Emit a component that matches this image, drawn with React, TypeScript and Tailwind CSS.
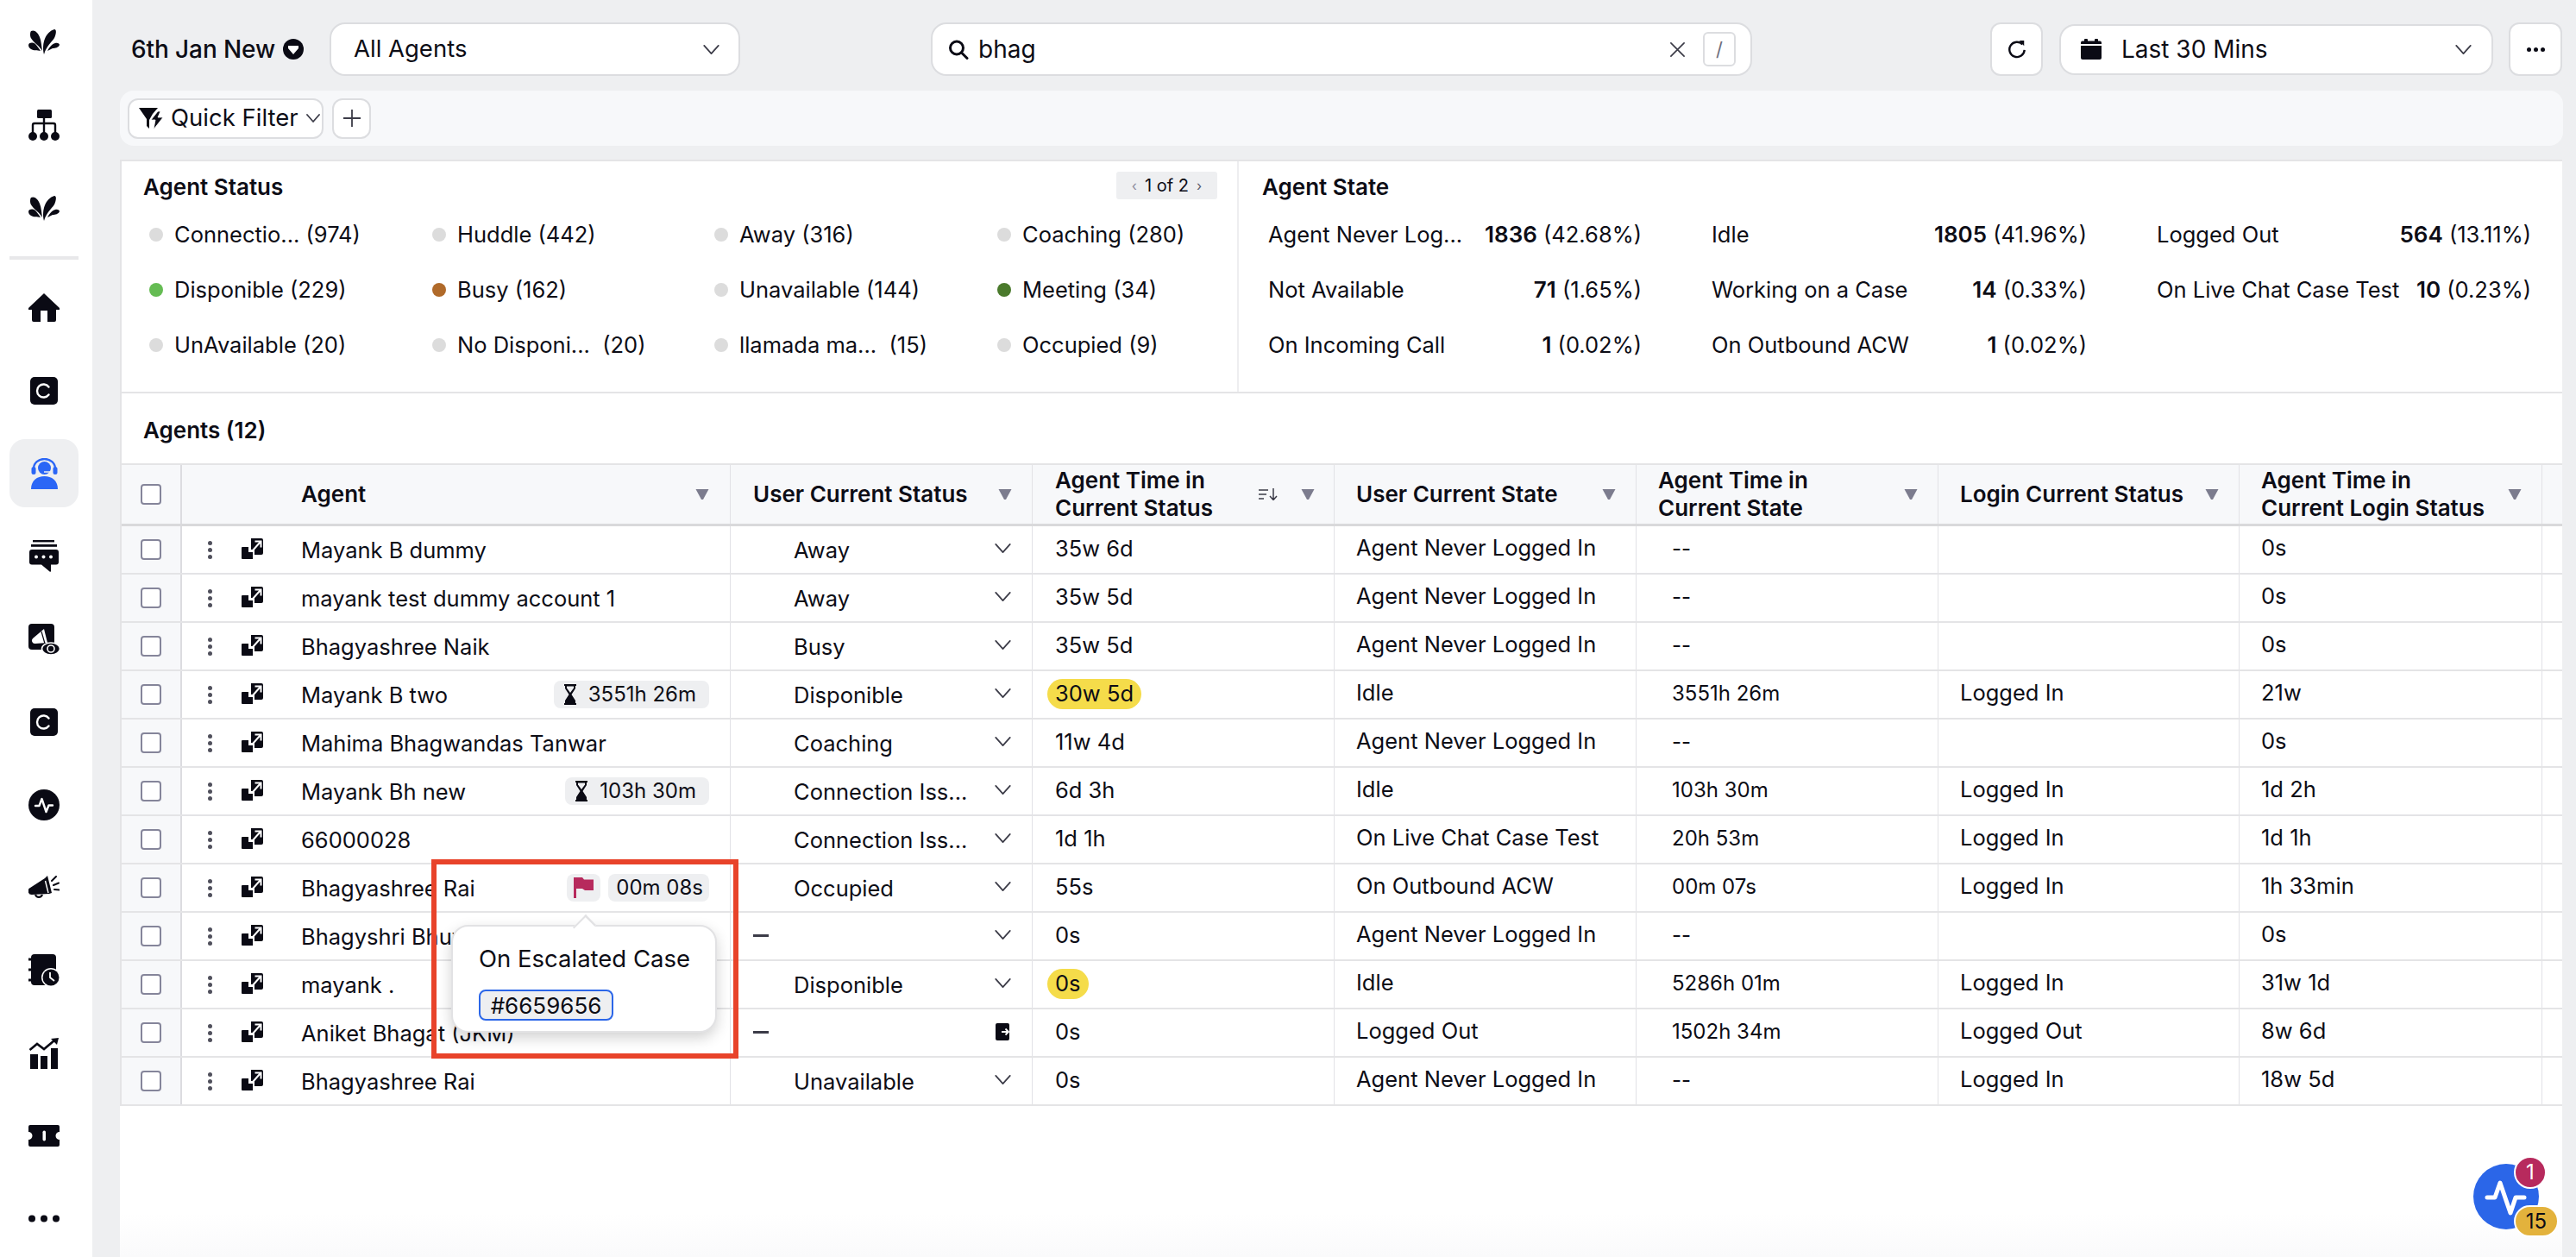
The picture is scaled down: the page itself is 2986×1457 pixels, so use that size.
import React from "react";

const Chevron = ({ className = "" }: { className?: string }) => (
  <svg viewBox="0 0 20 12" className={`w-[19px] h-[11px] ${className}`} fill="none" stroke="#3c3c48" strokeWidth="1.9" strokeLinecap="round" strokeLinejoin="round">
    <path d="M1 1 L10 11 L19 1" />
  </svg>
);

const Tri = ({ className = "" }: { className?: string }) => (
  <svg viewBox="0 0 16 12" className={`w-[16px] h-[12px] ${className}`} fill="#7c7c8e">
    <path d="M0.5 0 H15.5 L9 12 H7 Z" />
  </svg>
);

const Logo = ({ className = "" }: { className?: string }) => (
  <svg viewBox="0 0 36 29" className={className} fill="#0a0a14">
    <path d="M18 29 C15 16 20 3 30 0 C33 0 32 6 30 10 C26 16 21 19 18 29Z" />
    <path d="M3 2 C7 0 11 4 13 9 C15 14 15 19 16 25 C12 18 2 13 2 7 C2 5 2 3 3 2Z" />
    <path d="M0 18 C1 15 5 15 8 17 C10 19 12 22 14 25 C10 24 6 25 3 23 C1 22 0 20 0 18Z" />
    <path d="M22 25 C24 21 27 17 31 16 C34 15 36 17 36 18 C35 21 31 22 28 22 C26 23 24 24 22 25Z" />
  </svg>
);

const CBox = ({ className = "" }: { className?: string }) => (
  <svg viewBox="0 0 32 32" className={className}>
    <rect width="32" height="32" rx="5" fill="#0a0a14" />
    <path d="M21.5 11.5 A7.5 7.5 0 1 0 21.5 20.5" fill="none" stroke="#fff" strokeWidth="2.4" strokeLinecap="round" />
  </svg>
);

const OpenIcon = () => (
  <svg viewBox="0 0 25 24" className="w-[25px] h-[24px]">
    <path d="M1 10 H8 V16 H13 V24 H1 a1 1 0 0 1 -1 -1 V11 a1 1 0 0 1 1 -1Z" fill="#0a0a14" />
    <path d="M11 0 H23 a2 2 0 0 1 2 2 V17 a2 2 0 0 1 -2 2 H15 V13 H11 Z" fill="#0a0a14" />
    <path d="M13 14 L21.5 4.5 M15.5 3.5 H22.5 V10.5" fill="none" stroke="#fff" strokeWidth="2" />
  </svg>
);

const Hourglass = () => (
  <svg viewBox="0 0 16 24" className="w-[16px] h-[24px] shrink-0">
    <path d="M1 0 H15 V2 H14 V5 L9.5 12 L14 19 V22 H15 V24 H1 V22 H2 V19 L6.5 12 L2 5 V2 H1Z" fill="#0a0a14" />
    <path d="M4 2.5 H12 V4.5 L8 10 L4 4.5Z" fill="#eeeff1" />
  </svg>
);

const Flag = () => (
  <svg viewBox="0 0 23 24" className="w-[23px] h-[24px]" fill="#b72a5d">
    <path d="M0 0 H10 L12 2.5 H23 V15 H13 L10 13 H3 V24 H0Z" />
  </svg>
);

const LogoutBox = () => (
  <svg viewBox="0 0 18 20" className="w-[18px] h-[20px]">
    <path d="M2 0 H14 a2 2 0 0 1 2 2 V18 a2 2 0 0 1 -2 2 H2 a2 2 0 0 1 -2 -2 V2 a2 2 0 0 1 2 -2Z" fill="#0a0a14" />
    <path d="M7 10 H15 M11.5 6.5 L15 10 L11.5 13.5" fill="none" stroke="#fff" strokeWidth="1.8" />
  </svg>
);

type Row = {
  name: string;
  status: string;
  dash?: boolean;
  logout?: boolean;
  t1: string;
  pill?: boolean;
  state: string;
  t2: string;
  login: string;
  t3: string;
  badge?: string;
  flag?: boolean;
};

const rows: Row[] = [
  { name: "Mayank B dummy", status: "Away", t1: "35w 6d", state: "Agent Never Logged In", t2: "--", login: "", t3: "0s" },
  { name: "mayank test dummy account 1", status: "Away", t1: "35w 5d", state: "Agent Never Logged In", t2: "--", login: "", t3: "0s" },
  { name: "Bhagyashree Naik", status: "Busy", t1: "35w 5d", state: "Agent Never Logged In", t2: "--", login: "", t3: "0s" },
  { name: "Mayank B two", status: "Disponible", t1: "30w 5d", pill: true, state: "Idle", t2: "3551h 26m", login: "Logged In", t3: "21w", badge: "3551h 26m" },
  { name: "Mahima Bhagwandas Tanwar", status: "Coaching", t1: "11w 4d", state: "Agent Never Logged In", t2: "--", login: "", t3: "0s" },
  { name: "Mayank Bh new", status: "Connection Iss...", t1: "6d 3h", state: "Idle", t2: "103h 30m", login: "Logged In", t3: "1d 2h", badge: "103h 30m" },
  { name: "66000028", status: "Connection Iss...", t1: "1d 1h", state: "On Live Chat Case Test", t2: "20h 53m", login: "Logged In", t3: "1d 1h" },
  { name: "Bhagyashree Rai", status: "Occupied", t1: "55s", state: "On Outbound ACW", t2: "00m 07s", login: "Logged In", t3: "1h 33min", flag: true },
  { name: "Bhagyshri Bhuyan", status: "", dash: true, t1: "0s", state: "Agent Never Logged In", t2: "--", login: "", t3: "0s" },
  { name: "mayank .", status: "Disponible", t1: "0s", pill: true, state: "Idle", t2: "5286h 01m", login: "Logged In", t3: "31w 1d" },
  { name: "Aniket Bhagat (JKM)", status: "", dash: true, logout: true, t1: "0s", state: "Logged Out", t2: "1502h 34m", login: "Logged Out", t3: "8w 6d" },
  { name: "Bhagyashree Rai", status: "Unavailable", t1: "0s", state: "Agent Never Logged In", t2: "--", login: "Logged In", t3: "18w 5d" },
];

const statuses: [string, string, string][] = [
  ["bg-[#dcdcdc]", "Connectio...", "(974)"],
  ["bg-[#dcdcdc]", "Huddle", "(442)"],
  ["bg-[#dcdcdc]", "Away", "(316)"],
  ["bg-[#dcdcdc]", "Coaching", "(280)"],
  ["bg-[#65bc53]", "Disponible", "(229)"],
  ["bg-[#b06a2a]", "Busy", "(162)"],
  ["bg-[#dcdcdc]", "Unavailable", "(144)"],
  ["bg-[#4a7a2c]", "Meeting", "(34)"],
  ["bg-[#dcdcdc]", "UnAvailable", "(20)"],
  ["bg-[#dcdcdc]", "No Disponi...", " (20)"],
  ["bg-[#dcdcdc]", "llamada ma...", " (15)"],
  ["bg-[#dcdcdc]", "Occupied", "(9)"],
];

const states: [string, string, string][] = [
  ["Agent Never Log...", "1836", "(42.68%)"],
  ["Idle", "1805", "(41.96%)"],
  ["Logged Out", "564", "(13.11%)"],
  ["Not Available", "71", "(1.65%)"],
  ["Working on a Case", "14", "(0.33%)"],
  ["On Live Chat Case Test", "10", "(0.23%)"],
  ["On Incoming Call", "1", "(0.02%)"],
  ["On Outbound ACW", "1", "(0.02%)"],
];

const Check = () => <div className="w-[24px] h-[24px] rounded-[4px] border-2 border-[#85859a] bg-white" />;

export default function App() {
  return (
    <div className="relative flex w-[2986px] h-[1457px] overflow-hidden bg-[#eeeff1] font-[Inter,sans-serif] text-[25.5px] text-[#0d0d16]">
      {/* Sidebar */}
      <aside className="relative w-[107px] h-full shrink-0 bg-white">
        <Logo className="absolute left-[33px] top-[34px] w-[36px] h-[29px]" />
        <svg viewBox="0 0 36 36" className="absolute left-[33px] top-[127px] w-[36px] h-[36px]" fill="#0a0a14">
          <rect x="10" y="0" width="17" height="10" rx="1.5" />
          <path d="M18 10 V28 M5 28 V18 a2 2 0 0 1 2 -2 H29 a2 2 0 0 1 2 2 V28" fill="none" stroke="#0a0a14" strokeWidth="2.4" />
          <circle cx="5" cy="31" r="5" />
          <circle cx="18" cy="31" r="5" />
          <circle cx="31" cy="31" r="5" />
        </svg>
        <Logo className="absolute left-[33px] top-[227px] w-[36px] h-[29px]" />
        <div className="absolute left-[11px] top-[297px] w-[80px] h-[4px] bg-[#e8e8ea]" />
        <svg viewBox="0 0 36 33" className="absolute left-[33px] top-[340px] w-[36px] h-[33px]" fill="#0a0a14">
          <path d="M18 0 L36 17 V19 H32 V31 a2 2 0 0 1 -2 2 H22 V20 H14 V33 H6 a2 2 0 0 1 -2 -2 V19 H0 V17Z" />
        </svg>
        <CBox className="absolute left-[35px] top-[437px] w-[32px] h-[32px]" />
        <div className="absolute left-[11px] top-[509px] w-[80px] h-[79px] rounded-[18px] bg-[#eeeff1]" />
        <svg viewBox="0 0 31 36" className="absolute left-[36px] top-[531px] w-[31px] h-[36px]">
          <path d="M0 36 C0 26 7 21 15.5 21 C24 21 31 26 31 36Z" fill="#2b66f6" />
          <circle cx="15.5" cy="11.5" r="7.5" fill="#2b66f6" />
          <path d="M3 12 A12.5 11 0 0 1 28 12" fill="none" stroke="#2b66f6" strokeWidth="2.4" />
          <rect x="0.5" y="10" width="5" height="9" rx="2.5" fill="#2b66f6" />
          <rect x="25.5" y="10" width="5" height="9" rx="2.5" fill="#2b66f6" />
          <path d="M15 16 H25" stroke="#eeeff1" strokeWidth="1.5" />
        </svg>
        <svg viewBox="0 0 34 37" className="absolute left-[34px] top-[626px] w-[34px] h-[37px]" fill="#0a0a14">
          <rect x="4" y="0" width="25" height="2.4" />
          <rect x="2" y="5" width="30" height="2.8" />
          <path d="M3 11 H31 a3 3 0 0 1 3 3 V25.5 a3 3 0 0 1 -3 3 H25 V36 a0.8 0.8 0 0 1 -1.4 0.5 L14 28.5 H3 a3 3 0 0 1 -3 -3 V14 a3 3 0 0 1 3 -3Z" />
          <circle cx="8" cy="19.5" r="2" fill="#fff" />
          <circle cx="16.5" cy="19.5" r="2" fill="#fff" />
          <circle cx="25" cy="19.5" r="2" fill="#fff" />
        </svg>
        <svg viewBox="0 0 36 36" className="absolute left-[33px] top-[723px] w-[36px] h-[36px]">
          <rect width="30" height="30" rx="4" fill="#0a0a14" />
          <path d="M5 17 L18 6 L22 22 L8 23 A3.5 3.5 0 0 1 5 17Z" fill="#fff" />
          <path d="M15 9 L19 23" stroke="#0a0a14" strokeWidth="1.2" />
          <ellipse cx="26" cy="29" rx="10.5" ry="7" fill="#0a0a14" stroke="#fff" strokeWidth="1.6" />
          <circle cx="26" cy="29" r="4" fill="none" stroke="#fff" strokeWidth="1.6" />
        </svg>
        <CBox className="absolute left-[35px] top-[821px] w-[32px] h-[32px]" />
        <svg viewBox="0 0 36 36" className="absolute left-[33px] top-[915px] w-[36px] h-[36px]">
          <circle cx="18" cy="18" r="18" fill="#0a0a14" />
          <path d="M8 19 H12.5 L15.5 11 L20.5 26 L23.5 18.5 H28" fill="none" stroke="#fff" strokeWidth="2.4" strokeLinecap="round" strokeLinejoin="round" />
        </svg>
        <svg viewBox="0 0 36 30" className="absolute left-[33px] top-[1014px] w-[36px] h-[30px]">
          <path d="M2 15 L19 4 L22 1 L27 21 L24 22 L4 23 A4.2 4.2 0 0 1 2 15Z" fill="#0a0a14" />
          <path d="M19.5 7 L23 21" stroke="#fff" strokeWidth="1.4" />
          <path d="M8 23 A4.2 4.2 0 0 0 16 23" fill="none" stroke="#0a0a14" strokeWidth="2.2" />
          <path d="M27 7 L32 2 M29 12 L35 9.5 M30 17 L36 17.5" stroke="#0a0a14" strokeWidth="2" strokeLinecap="round" />
        </svg>
        <svg viewBox="0 0 36 38" className="absolute left-[33px] top-[1106px] w-[36px] h-[38px]">
          <rect x="3" y="0" width="29" height="36" rx="4" fill="#0a0a14" />
          <path d="M0.5 6 H6 M0.5 18 H6 M0.5 30 H6" stroke="#0a0a14" strokeWidth="3" strokeLinecap="round" />
          <circle cx="26" cy="27" r="11" fill="#fff" />
          <circle cx="26" cy="27" r="9.5" fill="#0a0a14" />
          <path d="M25 21 V27 L30 31" fill="none" stroke="#fff" strokeWidth="1.8" />
        </svg>
        <svg viewBox="0 0 34 36" className="absolute left-[34px] top-[1203px] w-[34px] h-[36px]" fill="#0a0a14">
          <rect x="1" y="19" width="9" height="17" />
          <rect x="13" y="21" width="8" height="15" />
          <rect x="25" y="12" width="8" height="24" />
          <path d="M0.5 14 L9 7 L17 13 L29 3" fill="none" stroke="#0a0a14" strokeWidth="2.6" />
          <path d="M25 1 L34 0 L32 8Z" />
        </svg>
        <svg viewBox="0 0 36 25" className="absolute left-[33px] top-[1304px] w-[36px] h-[25px]">
          <path d="M2 0 H34 a2 2 0 0 1 2 2 V8 a4.5 4.5 0 0 0 0 9 V23 a2 2 0 0 1 -2 2 H2 a2 2 0 0 1 -2 -2 V17 a4.5 4.5 0 0 0 0 -9 V2 a2 2 0 0 1 2 -2Z" fill="#0a0a14" />
          <rect x="16.5" y="6.5" width="3.5" height="12" rx="1.7" fill="#fff" />
        </svg>
        <svg viewBox="0 0 36 11" className="absolute left-[33px] top-[1407px] w-[36px] h-[11px]" fill="#0a0a14">
          <circle cx="4" cy="5.5" r="4" />
          <circle cx="18" cy="5.5" r="4" />
          <circle cx="32" cy="5.5" r="4" />
        </svg>
      </aside>

      {/* Main */}
      <main className="relative flex-1 h-full">
        {/* Top bar */}
        <div className="flex items-center h-[62px] mt-[26px]">
          <div className="flex items-center w-[275px] pl-[45px] font-medium text-[28px] tracking-[-0.1px]">
            <span>6th Jan New</span>
            <svg viewBox="0 0 24 24" className="w-[24px] h-[24px] ml-[9px]">
              <circle cx="12" cy="12" r="12" fill="#0a0a14" />
              <path d="M6 8 H18 V11 L12 18 L6 11Z" fill="#fff" />
            </svg>
          </div>
          <div className="flex items-center justify-between w-[476px] h-[62px] rounded-[18px] border-2 border-[#dcdde0] bg-white pl-[26px] pr-[22px] text-[27.5px]">
            <span>All Agents</span>
            <Chevron />
          </div>
          <div className="flex items-center w-[952px] h-[62px] ml-[221px] rounded-[18px] border-2 border-[#dcdde0] bg-white pl-[18px] pr-[17px]">
            <svg viewBox="0 0 24 23" className="w-[24px] h-[23px]" fill="none" stroke="#0a0a14" strokeWidth="3">
              <circle cx="10" cy="9.5" r="7.5" />
              <path d="M15.5 15 L22 21.5" strokeLinecap="round" />
            </svg>
            <span className="ml-[11px] text-[28px]">bhag</span>
            <svg viewBox="0 0 20 20" className="w-[19px] h-[19px] ml-auto" fill="none" stroke="#3c3c48" strokeWidth="1.8" strokeLinecap="round">
              <path d="M2 2 L18 18 M18 2 L2 18" />
            </svg>
            <div className="flex items-center justify-center w-[38px] h-[40px] ml-[20px] rounded-[6px] border-2 border-[#dcdde0] text-[22px] text-[#6e6e7c]">/</div>
          </div>
          <div className="flex items-center justify-center w-[61px] h-[62px] ml-[276px] rounded-[12px] border-2 border-[#dcdde0] bg-white">
            <svg viewBox="0 0 24 24" className="w-[22px] h-[22px]" fill="none" stroke="#0a0a14" strokeWidth="2.6">
              <path d="M19 6 A9.5 9.5 0 1 0 21.5 13" />
              <path d="M15 1 L21 1 L21 8Z" fill="#0a0a14" stroke="none" />
            </svg>
          </div>
          <div className="flex items-center w-[503px] h-[59px] ml-[19px] rounded-[18px] border-2 border-[#dcdde0] bg-white pl-[23px] pr-[23px] text-[28px]">
            <svg viewBox="0 0 24 24" className="w-[24px] h-[24px]" fill="#0a0a14">
              <rect x="4" y="0" width="4" height="4" rx="1" />
              <rect x="16" y="0" width="4" height="4" rx="1" />
              <path d="M2 2.5 H22 a2 2 0 0 1 2 2 V6 H0 V4.5 a2 2 0 0 1 2 -2Z" />
              <path d="M0 8 H24 V22 a2 2 0 0 1 -2 2 H2 a2 2 0 0 1 -2 -2Z" />
            </svg>
            <span className="ml-[23px]">Last 30 Mins</span>
            <Chevron className="ml-auto" />
          </div>
          <div className="flex items-center justify-center gap-[3px] w-[62px] h-[62px] ml-[18px] rounded-[12px] border-2 border-[#dcdde0] bg-white">
            <span className="w-[5px] h-[5px] rounded-full bg-[#0a0a14]" />
            <span className="w-[5px] h-[5px] rounded-full bg-[#0a0a14]" />
            <span className="w-[5px] h-[5px] rounded-full bg-[#0a0a14]" />
          </div>
        </div>

        {/* Filter bar */}
        <div className="flex items-center gap-[10px] w-[2832px] h-[64px] mt-[17px] ml-[32px] pl-[9px] rounded-[16px] bg-[#f7f8fa]">
          <div className="flex items-center w-[227px] h-[47px] rounded-[12px] border-2 border-[#dcdde0] bg-white pl-[11px] text-[27.5px] whitespace-nowrap">
            <svg viewBox="0 0 28 25" className="w-[28px] h-[25px] shrink-0" fill="#0a0a14">
              <path d="M0 0 H22 L16 7 L12 14 V24 L9 21 V13 Z" />
              <path d="M22 4 L14 14 H19 L17 25 L28 11 H22 L25 4Z" stroke="#fff" strokeWidth="0.8" />
            </svg>
            <span className="ml-[9px]">Quick Filter</span>
            <svg viewBox="0 0 16 10" className="w-[16px] h-[10px] ml-[9px] shrink-0" fill="none" stroke="#3c3c48" strokeWidth="1.8" strokeLinecap="round" strokeLinejoin="round">
              <path d="M1 1 L8 9 L15 1" />
            </svg>
          </div>
          <div className="flex items-center justify-center w-[45px] h-[47px] rounded-[12px] border-2 border-[#dcdde0] bg-white">
            <svg viewBox="0 0 20 20" className="w-[20px] h-[20px]" fill="none" stroke="#3c3c48" strokeWidth="1.8">
              <path d="M10 0 V20 M0 10 H20" />
            </svg>
          </div>
        </div>

        {/* Panel */}
        <div className="absolute left-[32px] top-[185px] w-[2831px] h-[1272px] bg-white">
          {/* Summary */}
          <div className="flex h-[271px] border-t-2 border-l-2 border-b-2 border-[#e4e4e6]">
            <div className="relative w-[1295px] h-full border-r-2 border-[#eeeef0] pl-[25px]">
              <div className="flex items-center h-[58px] text-[26px] font-semibold">Agent Status</div>
              <div className="absolute left-[1153px] top-[12px] flex items-center justify-center gap-[9px] w-[117px] h-[32px] rounded-[3px] bg-[#eeeff1] text-[20px]">
                <span className="text-[#8c8c9c] text-[16px]">‹</span>
                <span>1 of 2</span>
                <span className="text-[#5c5c6c] text-[16px]">›</span>
              </div>
              <div className="grid grid-cols-[328px_327px_328px_auto] mt-[-5px] pl-[7px]">
                {statuses.map(([dot, label, count]) => (
                  <div key={label + count} className="flex items-center h-[64px]">
                    <span className={`w-[16px] h-[16px] rounded-full shrink-0 ${dot}`} />
                    <span className="ml-[13px] whitespace-pre">{label} {count}</span>
                  </div>
                ))}
              </div>
            </div>
            <div className="relative flex-1 pl-[27px]">
              <div className="flex items-center h-[58px] text-[26px] font-semibold">Agent State</div>
              <div className="grid grid-cols-[433px_435px_434px] gap-x-[81px] mt-[-5px] ml-[7px]">
                {states.map(([label, n, pct]) => (
                  <div key={label} className="flex items-center justify-between h-[64px]">
                    <span>{label}</span>
                    <span className="whitespace-pre"><b className="font-semibold text-[26px]">{n}</b> {pct}</span>
                  </div>
                ))}
              </div>
            </div>
          </div>

          {/* Title */}
          <div className="flex items-center h-[81px] pt-[3px] pl-[25px] text-[26px] font-semibold border-l-2 border-[#e4e4e6]">Agents (12)</div>

          {/* Table */}
          <div className="border-l-2 border-[#e4e4e6]">
            <div className="flex h-[73px] border-t-2 border-b-[3px] border-t-[#e4e4e6] border-b-[#d9d9db] bg-[#f7f8fa] text-[26px] font-semibold leading-[32px]">
              <div className="flex items-center justify-center w-[70px] border-r-2 border-[#dcdce0]"><Check /></div>
              <div className="flex items-center justify-between w-[636px] border-r border-[#e2e2e6] pl-[138px] pr-[24px]"><span>Agent</span><Tri /></div>
              <div className="flex items-center justify-between w-[350px] border-r border-[#e2e2e6] pl-[26px] pr-[23px]"><span>User Current Status</span><Tri /></div>
              <div className="flex items-center w-[350px] border-r border-[#e2e2e6] pl-[26px] pr-[22px]">
                <span>Agent Time in<br />Current Status</span>
                <svg viewBox="0 0 23 14" className="w-[23px] h-[14px] ml-auto" fill="none" stroke="#3c3c48" strokeWidth="1.5">
                  <path d="M0 2 H11 M0 7 H9 M0 12 H6 M17 0 V13 M13 9 L17 13.5 L21 9" />
                </svg>
                <Tri className="ml-[26px]" />
              </div>
              <div className="flex items-center justify-between w-[350px] border-r border-[#e2e2e6] pl-[25px] pr-[23px]"><span>User Current State</span><Tri /></div>
              <div className="flex items-center justify-between w-[350px] border-r border-[#e2e2e6] pl-[25px] pr-[23px]"><span>Agent Time in<br />Current State</span><Tri /></div>
              <div className="flex items-center justify-between w-[349px] border-r border-[#e2e2e6] pl-[25px] pr-[23px] whitespace-nowrap"><span>Login Current Status</span><Tri /></div>
              <div className="flex items-center justify-between w-[351px] border-r border-[#e2e2e6] pl-[25px] pr-[23px]"><span>Agent Time in<br />Current Login Status</span><Tri /></div>
              <div className="flex-1" />
            </div>
            {rows.map((r, i) => (
              <div key={i} className="flex h-[56px] border-b-2 border-[#e4e4e6]">
                <div className="flex items-center justify-center w-[70px] border-r-2 border-[#dcdce0] bg-[#f7f8fa]"><Check /></div>
                <div className="relative flex items-center w-[636px] border-r border-[#e2e2e6] pl-[138px] pr-[24px] pt-[3px]">
                  <div className="absolute left-[30px] top-[17px] flex flex-col gap-[3px]">
                    <span className="w-[5px] h-[5px] rounded-full bg-[#50505c]" />
                    <span className="w-[5px] h-[5px] rounded-full bg-[#50505c]" />
                    <span className="w-[5px] h-[5px] rounded-full bg-[#50505c]" />
                  </div>
                  <div className="absolute left-[69px] top-[14px]"><OpenIcon /></div>
                  <span className="whitespace-nowrap">{r.name}</span>
                  {r.badge && (
                    <span className="ml-auto flex items-center gap-[13px] h-[32px] mt-[-3px] pl-[11px] pr-[15px] rounded-[8px] bg-[#eeeff1] text-[24px]">
                      <Hourglass />
                      {r.badge}
                    </span>
                  )}
                  {r.flag && (
                    <span className="ml-auto flex items-center gap-[9px] mt-[-3px]">
                      <span className="flex items-center justify-center w-[39px] h-[32px] rounded-[8px] bg-[#eeeff1]"><Flag /></span>
                      <span className="flex items-center h-[32px] pl-[9px] pr-[7px] rounded-[8px] bg-[#eeeff1] text-[24px]">00m 08s</span>
                    </span>
                  )}
                </div>
                <div className="relative flex items-center w-[350px] border-r border-[#e2e2e6] pl-[73px] pr-[24px] pt-[3px]">
                  {r.dash && <span className="absolute left-[26px] top-[25px] w-[18px] h-[3px] bg-[#3c3c48]" />}
                  <span>{r.status}</span>
                  {r.logout ? <span className="ml-auto mt-[-6px]"><LogoutBox /></span> : <Chevron className="ml-auto mt-[-7px]" />}
                </div>
                <div className="flex items-center w-[350px] border-r border-[#e2e2e6] pl-[26px] pb-[2px]">
                  {r.pill ? (
                    <span className="flex items-center justify-center h-[35px] ml-[-9px] px-[9px] rounded-full bg-[#f5dc4a]">{r.t1}</span>
                  ) : (
                    <span>{r.t1}</span>
                  )}
                </div>
                <div className="flex items-center w-[350px] border-r border-[#e2e2e6] pl-[25px] pb-[3px]">{r.state}</div>
                <div className="flex items-center w-[350px] border-r border-[#e2e2e6] pl-[41px] pb-[2px] text-[24px]">{r.t2}</div>
                <div className="flex items-center w-[349px] border-r border-[#e2e2e6] pl-[25px] pb-[3px]">{r.login}</div>
                <div className="flex items-center w-[351px] border-r border-[#e2e2e6] pl-[25px] pb-[4px]">{r.t3}</div>
                <div className="flex-1" />
              </div>
            ))}
          </div>
        </div>

        {/* Bottom fade */}
        <div className="absolute left-[32px] bottom-0 w-[2831px] h-[50px] bg-linear-to-t from-[#fafafb] to-transparent" />
      </main>

      {/* Popover */}
      <div className="absolute left-[523px] top-[1072px] w-[308px] h-[125px] rounded-[20px] border-2 border-[#e2e2e4] bg-white shadow-[0_6px_16px_rgba(0,0,0,0.18)] z-20 pl-[30px] pt-[20px]">
        <div className="absolute left-[144px] top-[-9px] w-[17px] h-[17px] rotate-45 scale-y-125 border-l-2 border-t-2 border-[#e2e2e4] bg-white" />
        <div className="relative leading-[34px] text-[27.5px] whitespace-nowrap">On Escalated Case</div>
        <div className="flex items-center justify-center w-[156px] h-[36px] mt-[19px] rounded-[8px] border-2 border-[#2b66e8] bg-[#eeeff1] text-[26px]">#6659656</div>
      </div>

      {/* Highlight */}
      <div className="absolute left-[500px] top-[996px] w-[356px] h-[231px] border-[6px] border-[#e8432a] z-30" />

      {/* Widget */}
      <div className="absolute left-[2867px] top-[1340px] w-[100px] h-[95px] z-30">
        <div className="absolute left-0 top-[9px] w-[76px] h-[76px] rounded-full bg-[#2b66e8]">
          <svg viewBox="0 0 76 76" className="w-[76px] h-[76px]" fill="none" stroke="#fff" strokeWidth="5" strokeLinecap="round" strokeLinejoin="round">
            <path d="M16 39 H25 L31 22 L43 57 L49 39 H59" />
          </svg>
        </div>
        <div className="absolute left-[47px] top-0 flex items-center justify-center w-[38px] h-[38px] rounded-full border-2 border-white bg-[#b72a5d] text-[24px] text-white">1</div>
        <div className="absolute left-[47px] top-[57px] flex items-center justify-center w-[52px] h-[37px] rounded-full border-2 border-white bg-[#e3b23c] text-[24px]">15</div>
      </div>
    </div>
  );
}
